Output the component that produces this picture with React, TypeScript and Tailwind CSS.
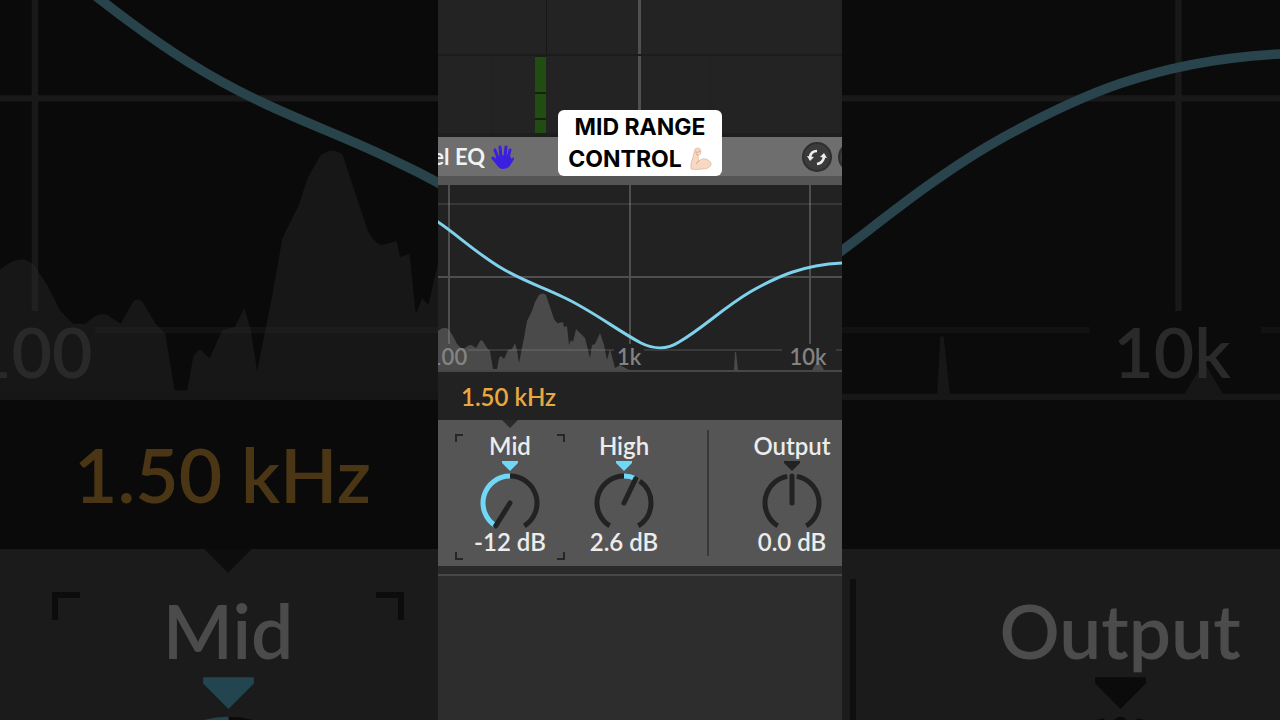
import { useState } from 'react';

const CURVE =
  'M-4 219 L0 222 C18 234 36 251 60 266 S105 287 125 297 C155 311 180 331 203 343 C215 349 229 350 241 342 C265 328 285 308 312 292 C340 276 365 265 404 263 L408 263';

const SPECTRUM =
  'M0 370 V331 Q7 325 11 330 L15 336 L19 344 L23 348 H27 Q32 343 35 346 L38 348 L42 341 Q44 339 46 343 L49 348 L52 351 L55 369 H59 L61 358 L63 356 L66 359 L70 350 L74 349 L77 343 L79 350 L81 363 L83 353 L86 338 L89 321 L94 311 L97 302 L101 295 Q105 292 108 295 L113 310 L116 319 Q119 324 121 323 L125 322 L126 327 L129 326 L131 345 L133 340 L135 342 L138 329 L143 334 L147 338 L152 358 L154 345 L157 344 L162 333 L166 345 L169 360 L172 349 L177 368 L182 365 L191 370 Z';

const LOW = { x: 10, text: '100' };
const MID = { x: 191, text: '1k' };
const HIGH = { x: 370, text: '10k' };

type EqGraphProps = {
  viewBox: string;
  labels: { x: number; text: string }[];
  className: string;
};

function EqGraph({ viewBox, labels, className }: EqGraphProps) {
  return (
    <svg viewBox={viewBox} preserveAspectRatio="none" className={`block w-full ${className}`}>
      <rect x="0" y="185" width="404" height="188" fill="#222222" />
      <path d={SPECTRUM} fill="#4a4a4a" />
      <path d="M296 370 L297 352 H298 L300 370 Z M374 370 L380 360 L386 370 Z" fill="#4a4a4a" />
      <g stroke="#999999" strokeOpacity="0.38" strokeWidth="2">
        <path d="M11 185 V344 M192 185 V344 M372 185 V344 M0 277 H404" />
        <path d="M0 204 H404" strokeOpacity="0.18" />
        <path d="M30 350 H176 M206 350 H344 M398 350 H404" strokeOpacity="0.2" />
      </g>
      <path d="M0 371 H404" stroke="#474747" strokeWidth="2" />
      <g fill="#838383" fontSize="22" fontFamily="Lato, sans-serif" fontWeight="600" textAnchor="middle">
        {labels.map((label) => (
          <text key={label.text} x={label.x} y="365">
            {label.text}
          </text>
        ))}
      </g>
      <path d={CURVE} fill="none" stroke="#80d2ec" strokeWidth="3" />
    </svg>
  );
}

const point = (deg: number, r = 27) => {
  const rad = (deg * Math.PI) / 180;
  return `${32 + r * Math.sin(rad)} ${49 - r * Math.cos(rad)}`;
};

const arc = (from: number, to: number) =>
  to <= from ? '' : `M${point(from)} A27 27 0 ${to - from > 180 ? 1 : 0} 1 ${point(to)}`;

const END = 148;

function Dial({ value, range, className }: { value: number; range: number; className: string }) {
  const angle = (value / range) * END;
  const left = angle > 0 ? 0 : angle - 10;
  const right = angle < 0 ? 0 : angle + 10;

  return (
    <svg viewBox="0 0 64 76" className={`block shrink-0 ${className}`}>
      <path d="M24 7 H40 V9 L32 17 L24 9 Z" fill={value === 0 ? '#222222' : '#6fd8f7'} />
      <g fill="none" strokeWidth="5">
        <path d={arc(-END, left)} stroke="#222222" />
        <path d={arc(right, END)} stroke="#222222" />
        <path d={arc(Math.min(0, angle), Math.max(0, angle))} stroke="#6fd8f7" />
        <path d={`M32 49 L${point(angle)}`} stroke="#222222" strokeLinecap="round" />
      </g>
    </svg>
  );
}

function Corners({ className }: { className: string }) {
  return (
    <div className="absolute inset-0 flex flex-col justify-between">
      <div className="flex justify-between">
        <i className={`border-t-[#262626] border-l-[#262626] ${className} border-r-0 border-b-0`} />
        <i className={`border-t-[#262626] border-r-[#262626] ${className} border-l-0 border-b-0`} />
      </div>
      <div className="flex justify-between">
        <i className={`border-b-[#262626] border-l-[#262626] ${className} border-t-0 border-r-0`} />
        <i className={`border-b-[#262626] border-r-[#262626] ${className} border-t-0 border-l-0`} />
      </div>
    </div>
  );
}

type KnobProps = {
  label: string;
  initial: number;
  range: number;
  digits?: number;
  selected?: boolean;
};

function Knob({ label, initial, range, digits = 1, selected }: KnobProps) {
  const [value, setValue] = useState(initial);

  return (
    <label className="relative flex h-[126px] w-[110px] shrink-0 flex-col items-center text-2xl leading-6 font-semibold text-[#ececec]">
      {selected && <Corners className="size-2 border-2" />}
      <span>{label}</span>
      <Dial value={value} range={range} className="-mt-1 h-[76px] w-[64px]" />
      <span className="whitespace-nowrap">{value.toFixed(digits)} dB</span>
      <input
        type="range"
        min={-range}
        max={range}
        step="0.1"
        value={value}
        onChange={(e) => setValue(Number(e.target.value))}
        className="absolute inset-0 h-full w-full cursor-pointer opacity-0"
      />
    </label>
  );
}

function HandIcon() {
  return (
    <svg viewBox="0 0 24 26" className="h-[26px] w-6 shrink-0">
      <g stroke="#3a1fe0" strokeLinecap="round" fill="none" strokeWidth="3">
        <path d="M7 14 L4 6" />
        <path d="M10 13 L9 3" />
        <path d="M14 13 L15 3" />
        <path d="M17 14 L19 6" />
        <path d="M7 20 L2 14" />
      </g>
      <path d="M5 12 L18 11 L21 15 L22 13 Q24 14 22 17 L18 23 Q15 25 12 25 Q8 25 6 21 L4 18 Z" fill="#3a1fe0" />
    </svg>
  );
}

function SwapIcon() {
  return (
    <svg viewBox="0 0 30 30" className="size-[30px]">
      <circle cx="15" cy="15" r="14" fill="#3b3b3b" stroke="#2e2e2e" strokeWidth="2" />
      <g fill="none" stroke="#eeeeee" strokeWidth="2.6">
        <path d="M15 9 Q9 9 8 15" />
        <path d="M15 22 Q21 21 22 15" />
      </g>
      <path d="M5 14 L12 15 L8 19 Z M18 15 L22 11 L25 16 Z" fill="#eeeeee" />
    </svg>
  );
}

function ArmIcon() {
  return (
    <svg viewBox="0 0 22 24" className="h-6 w-[22px] shrink-0">
      <path
        d="M5 2 Q8 0 10 2 L11 5 Q11 7 9 8 L8 8 Q8 11 9 14 Q13 10 18 13 Q22 15 21 18 Q19 22 12 22 Q6 23 1 22 Q0 17 3 10 Q4 6 5 2 Z"
        fill="#f7d8c3"
        stroke="#e5b99e"
        strokeWidth="0.8"
      />
      <path d="M5 5 Q8 6 10 4 M8 8 L6 7 M9 14 Q7 15 6 17" fill="none" stroke="#d39f82" strokeWidth="0.9" />
    </svg>
  );
}

function Arrangement() {
  return (
    <div className="flex h-[137px] flex-col bg-[#232323]">
      <div className="flex h-[56px] border-b-2 border-[#1c1c1c]">
        <div className="w-[109px] border-r border-[#171717]" />
        <div className="ml-[91px] w-[3px] bg-[#505050]" />
      </div>
      <div className="flex flex-1 border-b-4 border-[#1e1e1e]">
        <div className="w-[54px] border-r border-[#1f1f1f]" />
        <div className="ml-[43px] flex w-[11px] flex-col gap-[2px] bg-[#12240c] pt-[1px]">
          <div className="h-[35px] bg-[#214d13]" />
          <div className="h-[24px] bg-[#214d13]" />
          <div className="flex-1 bg-[#214d13]" />
        </div>
        <div className="ml-[92px] w-[3px] bg-[#505050]" />
        <div className="w-[70px] border-r border-[#202020]" />
      </div>
    </div>
  );
}

function BackdropLeft() {
  return (
    <div aria-hidden="true" className="h-screen overflow-hidden opacity-32">
      <EqGraph viewBox="0 246 138 126" labels={[LOW]} className="h-[400px]" />
      <div className="relative flex h-[149px] items-center bg-[#222222] pl-[74px] text-[75px] leading-none font-semibold whitespace-nowrap text-[#e8a840]">
        1.50 kHz
        <svg viewBox="0 0 48 24" className="absolute top-full left-[204px] h-6 w-12">
          <path d="M0 0 H48 L24 24 Z" fill="#2a2a2a" />
        </svg>
      </div>
      <div className="flex h-[460px] bg-[#555555] pt-[43px] pl-[52px]">
        <div className="relative flex h-[399px] w-[352px] shrink-0 flex-col items-center text-[75px] leading-[77px] font-semibold text-[#ececec]">
          <Corners className="size-7 border-6" />
          Mid
          <Dial value={-12} range={12} className="-mt-[14px] h-[241px] w-[203px]" />
        </div>
      </div>
    </div>
  );
}

function BackdropRight() {
  return (
    <div aria-hidden="true" className="h-screen overflow-hidden opacity-32">
      <EqGraph viewBox="266 246 138 126" labels={[HIGH]} className="h-[400px]" />
      <div className="h-[149px] bg-[#222222]" />
      <div className="flex h-[460px] bg-[#555555] pl-2">
        <div className="mt-[30px] w-[6px] shrink-0 bg-[#303030]" />
        <div className="mt-[43px] ml-[88px] flex w-[352px] shrink-0 flex-col items-center text-[75px] leading-[77px] font-semibold text-[#ececec]">
          Output
          <Dial value={0} range={12} className="-mt-[14px] h-[241px] w-[203px]" />
        </div>
      </div>
    </div>
  );
}

export default function App() {
  return (
    <div className="grid h-screen grid-cols-[438fr_404fr_438fr] overflow-hidden bg-black font-[Lato,sans-serif]">
      <BackdropLeft />

      <main className="relative flex min-w-0 flex-col overflow-hidden bg-[#2d2d2d]">
        <Arrangement />

        <header className="flex h-12 items-center justify-between border-b-9 border-[#555555] bg-[#6e6e6e]">
          <div className="flex items-center gap-[6px]">
            <h1 className="flex w-[47px] justify-end overflow-hidden text-[22px] leading-7 font-bold whitespace-nowrap text-[#f2f2f2]">
              el EQ
            </h1>
            <HandIcon />
          </div>
          <div className="flex w-10 gap-[6px] overflow-hidden">
            <button type="button" aria-label="Swap" className="shrink-0">
              <SwapIcon />
            </button>
            <button type="button" aria-label="Save" className="size-[30px] shrink-0 rounded-full border-2 border-[#2e2e2e] bg-[#3b3b3b]" />
          </div>
        </header>

        <EqGraph viewBox="0 185 404 188" labels={[LOW, MID, HIGH]} className="h-[188px]" />

        <div className="relative flex h-[47px] items-center bg-[#222222] pl-[23px] text-2xl leading-none font-semibold text-[#e8a840]">
          1.50 kHz
          <svg viewBox="0 0 16 8" className="absolute top-full left-16 z-10 h-2 w-4">
            <path d="M0 0 H16 L8 8 Z" fill="#2a2a2a" />
          </svg>
        </div>

        <section className="flex h-[146px] overflow-hidden bg-[#555555] pt-[14px] pl-[17px]">
          <Knob label="Mid" initial={-12} range={12} digits={0} selected />
          <div className="w-1 shrink-0" />
          <Knob label="High" initial={2.6} range={15} />
          <div className="mx-7 -mt-1 h-[126px] w-[2px] shrink-0 bg-[#383838]" />
          <Knob label="Output" initial={0} range={12} />
        </section>

        <div className="h-2 bg-[#2a2a2a]" />
        <div className="flex-1 border-t-2 border-[#484848] bg-[#2d2d2d]" />

        <div className="absolute top-[110px] left-1/2 flex w-[164px] -translate-x-1/2 flex-col items-center rounded-md bg-white py-[1px] font-[Inter,sans-serif] text-[23px] leading-8 font-bold whitespace-nowrap text-black">
          <p>MID RANGE</p>
          <p className="flex items-center gap-2">
            CONTROL
            <ArmIcon />
          </p>
        </div>
      </main>

      <BackdropRight />
    </div>
  );
}
